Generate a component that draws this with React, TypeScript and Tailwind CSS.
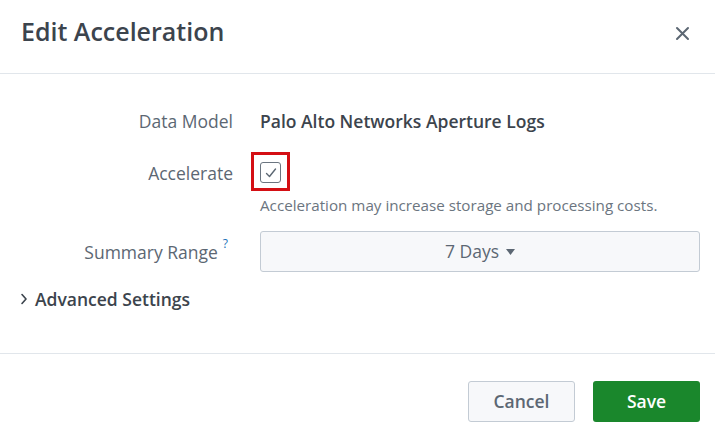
import React from "react";

export default function App() {
  return (
    <div className="w-[715px] h-[439px] bg-white text-[#3c444d] overflow-hidden" style={{ fontFamily: "'Open Sans', Lato, sans-serif" }}>
      <div className="h-[74px] flex items-center justify-between pl-[21px] pr-[25px] border-b border-[#e1e6eb]">
        <h1 className="text-[25px] font-semibold leading-none -mt-[11px]">Edit Acceleration</h1>
        <button className="w-[15px] h-[15px] flex items-center justify-center -mt-[7px] text-[#5c6773]">
          <svg width="15" height="15" viewBox="0 0 15 15" fill="none" stroke="currentColor" strokeWidth="2" strokeLinecap="round">
            <path d="M2 2 L13 13 M13 2 L2 13" />
          </svg>
        </button>
      </div>

      <div className="h-[280px] border-b border-[#e1e6eb] pt-[36px] pr-[15px]">
        <div className="grid grid-cols-[233px_1fr] gap-x-[27px] items-center">
          <div className="text-right text-[17.5px] text-[#5c6773] leading-[22px]">Data Model</div>
          <div className="text-[17.5px] font-semibold leading-[22px]">Palo Alto Networks Aperture Logs</div>
        </div>

        <div className="grid grid-cols-[233px_1fr] gap-x-[27px] mt-[30px]">
          <div className="text-right text-[17.5px] text-[#5c6773] leading-[22px]">Accelerate</div>
          <div className="relative">
            <div className="w-[21px] h-[21px] rounded-[3px] border border-[#6b7580] bg-white flex items-center justify-center">
              <svg width="14" height="14" viewBox="0 0 14 14" fill="none" stroke="#5c6773" strokeWidth="1.4" strokeLinecap="round" strokeLinejoin="round">
                <path d="M2.5 7.5 L5.5 10.5 L11.5 3" />
              </svg>
            </div>
            <div className="absolute left-[-9px] top-[-10px] w-[39px] h-[39px] border-[3px] border-[#d40f14]" />
          </div>
        </div>

        <div className="grid grid-cols-[233px_1fr] gap-x-[27px] mt-[11px]">
          <div />
          <div className="text-[15.2px] text-[#6b7580] leading-[20px]">Acceleration may increase storage and processing costs.</div>
        </div>

        <div className="grid grid-cols-[233px_1fr] gap-x-[27px] items-center mt-[16px]">
          <div className="flex justify-end items-start pr-[5px] text-[#5c6773]">
            <span className="text-[17.5px] leading-[22px]">Summary Range</span>
            <span className="text-[12px] leading-[12px] text-[#1a73b8] ml-[5px] -mt-[3px]">?</span>
          </div>
          <button className="h-[41px] w-full rounded-[3px] border border-[#c3cbd4] bg-[#f7f8fa] flex items-center justify-center gap-[7px] text-[17.5px] text-[#5c6773]">
            <span>7 Days</span>
            <svg width="9" height="6" viewBox="0 0 9 6"><path d="M0 0 H9 L4.5 6 Z" fill="#5c6773" /></svg>
          </button>
        </div>

        <div className="flex items-center gap-[7px] pl-[20px] mt-[16px]">
          <svg width="8" height="12" viewBox="0 0 8 12" fill="none" stroke="#3c444d" strokeWidth="1.6" strokeLinecap="round" strokeLinejoin="round">
            <path d="M2 1.5 L6 6 L2 10.5" />
          </svg>
          <span className="text-[17.5px] font-semibold leading-[22px]">Advanced Settings</span>
        </div>
      </div>

      <div className="flex justify-end gap-[18px] pr-[15px] pt-[27px]">
        <button className="w-[107px] h-[41px] rounded-[3px] border border-[#c3cbd4] bg-[#f7f8fa] text-[17.5px] font-semibold text-[#5c6773]">Cancel</button>
        <button className="w-[107px] h-[41px] rounded-[3px] bg-[#1a872c] text-[17.5px] font-semibold text-white">Save</button>
      </div>
    </div>
  );
}
